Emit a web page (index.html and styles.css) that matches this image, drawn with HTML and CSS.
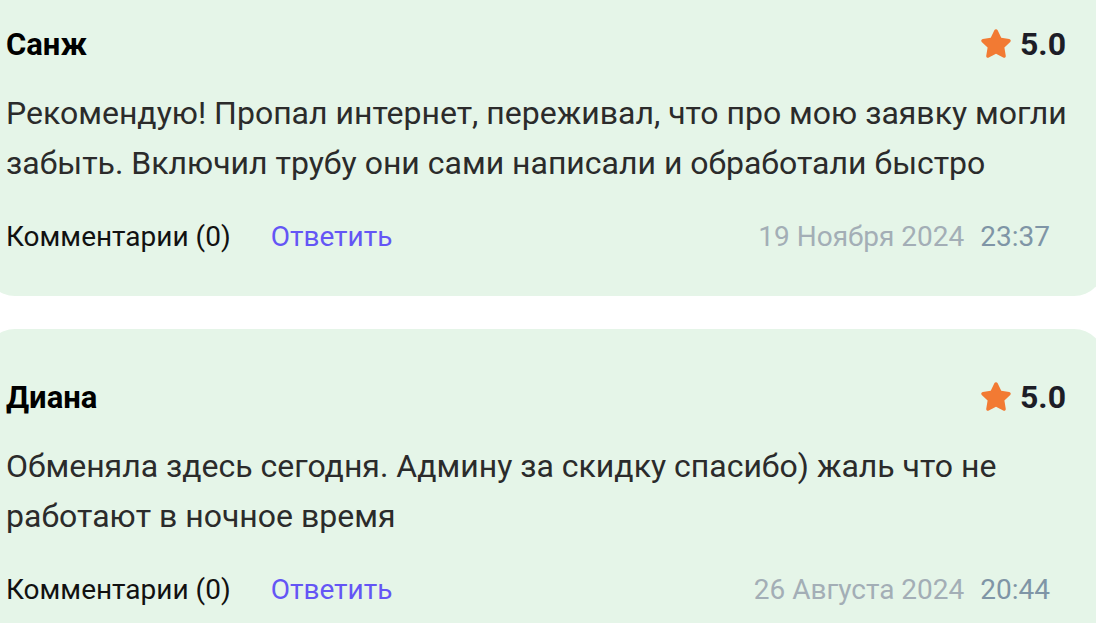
FILE: index.html
```html
<!DOCTYPE html>
<html lang="ru">
<head>
    <meta charset="UTF-8">
    <meta name="viewport" content="width=device-width, initial-scale=1.0">
    <title>Отзывы</title>
    <link rel="stylesheet" href="styles.css">
</head>
<body>
    <div class="reviews">
        <div class="review first">
            <div class="review-head">
                <span class="name">Санж</span>
                <span class="rating">
                    <svg class="star" viewBox="0 0 24 24"><path d="M12 2.2c.5 0 .9.3 1.1.7l2.4 4.9 5.3.8c1 .1 1.4 1.3.7 2l-3.9 3.8.9 5.4c.2 1-.8 1.7-1.7 1.2L12 18.5l-4.8 2.5c-.9.5-1.9-.2-1.7-1.2l.9-5.4-3.9-3.8c-.7-.7-.3-1.9.7-2l5.3-.8 2.4-4.9c.2-.4.6-.7 1.1-.7z"/></svg>
                    5.0
                </span>
            </div>
            <p class="text">Рекомендую! Пропал интернет, переживал, что про мою заявку могли забыть. Включил трубу они сами написали и обработали быстро</p>
            <div class="review-foot">
                <span class="comments">Комментарии (0)</span>
                <a class="reply" href="#">Ответить</a>
                <span class="date">19 Ноября 2024</span>
                <span class="time">23:37</span>
            </div>
        </div>

        <div class="review">
            <div class="review-head">
                <span class="name">Диана</span>
                <span class="rating">
                    <svg class="star" viewBox="0 0 24 24"><path d="M12 2.2c.5 0 .9.3 1.1.7l2.4 4.9 5.3.8c1 .1 1.4 1.3.7 2l-3.9 3.8.9 5.4c.2 1-.8 1.7-1.7 1.2L12 18.5l-4.8 2.5c-.9.5-1.9-.2-1.7-1.2l.9-5.4-3.9-3.8c-.7-.7-.3-1.9.7-2l5.3-.8 2.4-4.9c.2-.4.6-.7 1.1-.7z"/></svg>
                    5.0
                </span>
            </div>
            <p class="text">Обменяла здесь сегодня. Админу за скидку спасибо) жаль что не работают в ночное время</p>
            <div class="review-foot">
                <span class="comments">Комментарии (0)</span>
                <a class="reply" href="#">Ответить</a>
                <span class="date">26 Августа 2024</span>
                <span class="time">20:44</span>
            </div>
        </div>
    </div>
</body>
</html>
```

FILE: styles.css
```css
body {
    margin: 0;
    background: #fff;
    font-family: Roboto, "Noto Sans", Arial, sans-serif;
    overflow: hidden;
}
.reviews {
    display: flex;
    flex-direction: column;
    gap: 33px;
    margin: -24px -8px 0 -15px;
}
.review {
    background: #e5f5e8;
    border-radius: 30px;
    padding: 48px 54px 40px 21px;
}
.review-head {
    display: flex;
    justify-content: space-between;
    align-items: center;
    height: 40px;
}
.name {
    font-size: 31px;
    font-weight: bold;
    color: #000;
}
.rating {
    display: flex;
    align-items: center;
    gap: 6px;
    font-size: 32px;
    font-weight: bold;
    color: #1d1d27;
    margin-right: -16px;
}
.star {
    width: 36px;
    height: 36px;
    fill: #f27a33;
}
.text {
    margin: 24px -30px 0 0;
    font-size: 32px;
    line-height: 50px;
    color: #2b2b2b;
}
.review-foot {
    display: flex;
    align-items: center;
    margin-top: 28px;
    height: 40px;
    font-size: 28px;
}
.comments {
    color: #111;
}
.reply {
    color: #6455f5;
    text-decoration: none;
    margin-left: 40px;
}
.date {
    margin-left: auto;
    color: #a3aeb6;
}
.time {
    margin-left: 16px;
    color: #7f95a6;
}
```
